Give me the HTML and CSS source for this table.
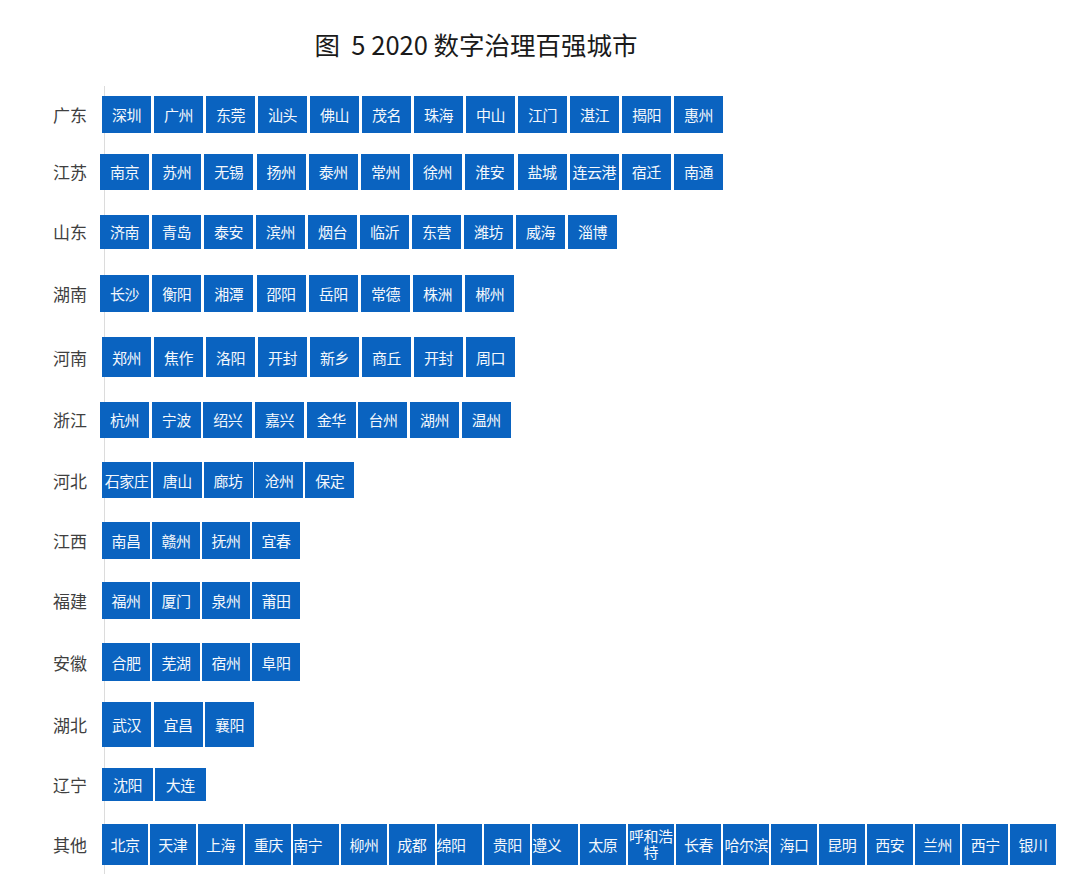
FILE: index.html
```html
<!DOCTYPE html>
<html lang="zh-CN">
<head>
<meta charset="utf-8">
<title>图 5 2020 数字治理百强城市</title>
<link rel="stylesheet" href="styles.css">
</head>
<body>
<div class="page">
  <h1 class="title">图&nbsp;&nbsp;5 2020 数字治理百强城市</h1>
  <div class="chart">
    <div class="label">广东</div>
    <div class="bars h37"><span class="box">深圳</span><span class="box">广州</span><span class="box">东莞</span><span class="box">汕头</span><span class="box">佛山</span><span class="box">茂名</span><span class="box">珠海</span><span class="box">中山</span><span class="box">江门</span><span class="box">湛江</span><span class="box">揭阳</span><span class="box">惠州</span></div>

    <div class="label">江苏</div>
    <div class="bars h36 left wide"><span class="box">南京</span><span class="box">苏州</span><span class="box">无锡</span><span class="box">扬州</span><span class="box">泰州</span><span class="box">常州</span><span class="box">徐州</span><span class="box">淮安</span><span class="box">盐城</span><span class="box">连云港</span><span class="box">宿迁</span><span class="box">南通</span></div>

    <div class="label">山东</div>
    <div class="bars h34 left"><span class="box">济南</span><span class="box">青岛</span><span class="box">泰安</span><span class="box">滨州</span><span class="box">烟台</span><span class="box">临沂</span><span class="box">东营</span><span class="box">潍坊</span><span class="box">威海</span><span class="box">淄博</span></div>

    <div class="label">湖南</div>
    <div class="bars h37 left wide"><span class="box">长沙</span><span class="box">衡阳</span><span class="box">湘潭</span><span class="box">邵阳</span><span class="box">岳阳</span><span class="box">常德</span><span class="box">株洲</span><span class="box">郴州</span></div>

    <div class="label">河南</div>
    <div class="bars h40"><span class="box">郑州</span><span class="box">焦作</span><span class="box">洛阳</span><span class="box">开封</span><span class="box">新乡</span><span class="box">商丘</span><span class="box">开封</span><span class="box">周口</span></div>

    <div class="label">浙江</div>
    <div class="bars h36 left g27"><span class="box">杭州</span><span class="box">宁波</span><span class="box">绍兴</span><span class="box">嘉兴</span><span class="box">金华</span><span class="box">台州</span><span class="box">湖州</span><span class="box">温州</span></div>

    <div class="label">河北</div>
    <div class="bars h36 g18"><span class="box">石家庄</span><span class="box">唐山</span><span class="box">廊坊</span><span class="box">沧州</span><span class="box">保定</span></div>

    <div class="label">江西</div>
    <div class="bars h37 slim"><span class="box">南昌</span><span class="box">赣州</span><span class="box">抚州</span><span class="box">宜春</span></div>

    <div class="label">福建</div>
    <div class="bars h37 slim"><span class="box">福州</span><span class="box">厦门</span><span class="box">泉州</span><span class="box">莆田</span></div>

    <div class="label">安徽</div>
    <div class="bars h38 slim"><span class="box">合肥</span><span class="box">芜湖</span><span class="box">宿州</span><span class="box">阜阳</span></div>

    <div class="label">湖北</div>
    <div class="bars h45 g25"><span class="box">武汉</span><span class="box">宜昌</span><span class="box">襄阳</span></div>

    <div class="label">辽宁</div>
    <div class="bars h33 g18"><span class="box wide-box">沈阳</span><span class="box wide-box">大连</span></div>

    <div class="label">其他</div>
    <div class="bars h41 dense"><span class="box">北京</span><span class="box">天津</span><span class="box">上海</span><span class="box">重庆</span><span class="box start">南宁</span><span class="box">柳州</span><span class="box">成都</span><span class="box start">绵阳</span><span class="box">贵阳</span><span class="box start">遵义</span><span class="box">太原</span><span class="box wrap">呼和浩特</span><span class="box">长春</span><span class="box">哈尔滨</span><span class="box">海口</span><span class="box">昆明</span><span class="box">西安</span><span class="box">兰州</span><span class="box">西宁</span><span class="box">银川</span></div>
  </div>
</div>
</body>
</html>
```

FILE: styles.css
```css
html, body {
  margin: 0;
  padding: 0;
  background: #ffffff;
}

.page {
  width: 1080px;
  height: 880px;
  font-family: "Noto Sans CJK SC", "Noto Sans", sans-serif;
  overflow: hidden;
}

.title {
  margin: 0;
  padding-top: 27px;
  padding-right: 128px;
  height: 34px;
  line-height: 34px;
  font-size: 25.5px;
  font-weight: 400;
  color: #1a1a1a;
  text-align: center;
}

.chart {
  margin-top: 25px;
  display: grid;
  grid-template-columns: 101px 979px;
  grid-template-rows: 56px 59px 61px 63px 64px 61px 60px 60px 61px 62px 62px 59px 60px;
  background-image: linear-gradient(#dcdcdc, #dcdcdc);
  background-size: 1px 100%;
  background-position: 104px 0;
  background-repeat: no-repeat;
}

.label {
  display: flex;
  align-items: center;
  padding-left: 53px;
  font-size: 17px;
  color: #404040;
  line-height: 1;
}

.bars {
  display: flex;
  align-items: center;
  gap: 3px;
  padding-left: 1px;
}

.bars.left {
  padding-left: 0;
  margin-left: -1px;
}

.bars.wide { gap: 3.2px; }
.bars.g27 { gap: 2.7px; }
.bars.g25 { gap: 2.5px; }
.bars.g18 { gap: 1.8px; }
.bars.slim { gap: 2px; }

.box {
  box-sizing: border-box;
  width: 49px;
  height: 100%;
  display: flex;
  align-items: center;
  justify-content: center;
  background: #0a63c0;
  color: #f4f8fc;
  font-size: 15px;
  line-height: 17px;
  white-space: nowrap;
  letter-spacing: -0.5px;
}

.slim .box { width: 48px; }
.box.wide-box { width: 51px; }

.h33 .box { height: 33px; }
.h34 .box { height: 34px; }
.h36 .box { height: 36px; }
.h37 .box { height: 37px; }
.h38 .box { height: 38px; }
.h40 .box { height: 40px; }
.h41 .box { height: 41px; }
.h45 .box { height: 45px; }

.bars.dense {
  gap: 2px;
}

.dense .box {
  width: 45.8px;
}

.box.start {
  justify-content: flex-start;
}

.box.wrap {
  white-space: normal;
  text-align: center;
  padding: 0 1px;
  flex-wrap: wrap;
  word-break: break-all;
  line-height: 16px;
}
```
